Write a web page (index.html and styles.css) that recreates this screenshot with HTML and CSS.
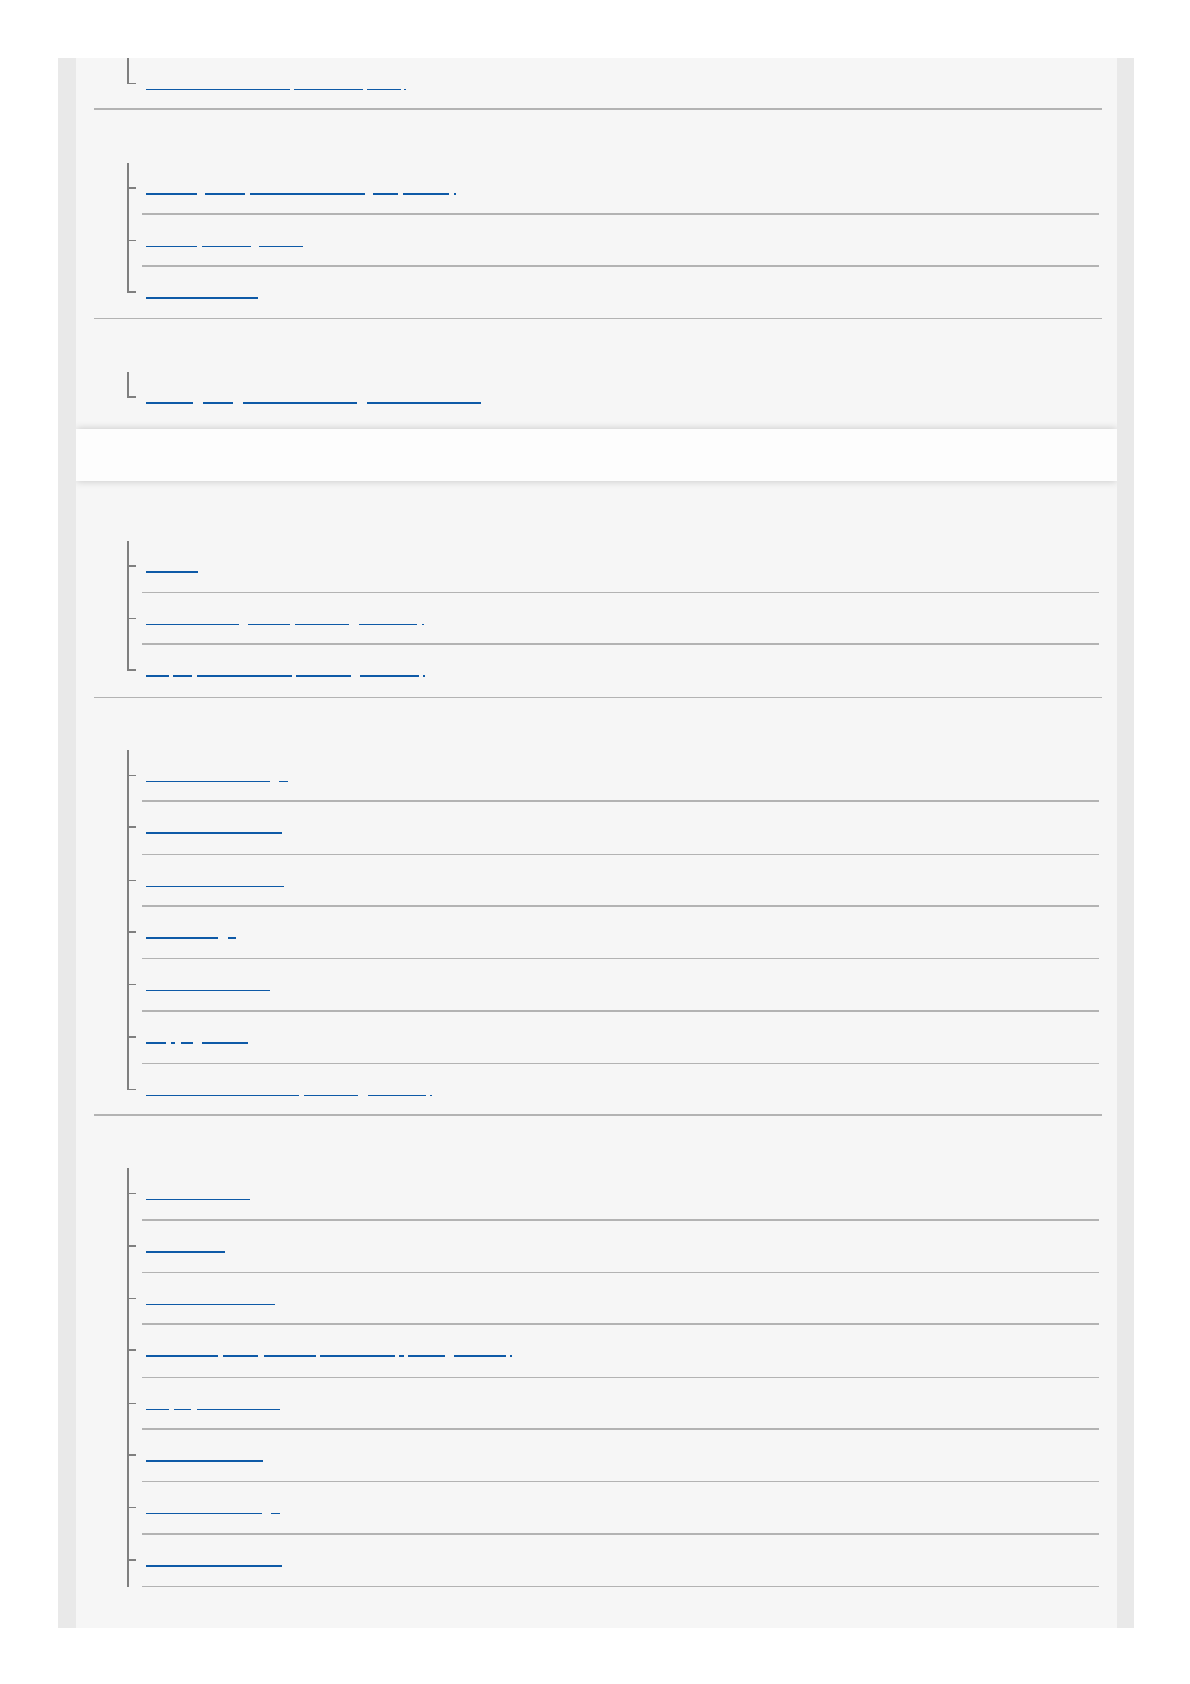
FILE: index.html
```html
<!DOCTYPE html>
<html lang="en">
<head>
<meta charset="utf-8">
<title>Help Guide</title>
<link rel="stylesheet" href="styles.css">
</head>
<body>
<div class="frame">
  <div class="inner">
    <section class="panel p1">
      <div class="g gt">
        <ul class="tree">
          <li class="last nd"><a class="ln"><span style="width:144px"></span><span style="margin-left:4px;width:69px"></span><span style="margin-left:4px;width:34px"></span><span style="margin-left:3px;width:2px"></span></a></li>
        </ul>
      </div>
      <div class="g">
        <div class="gh"></div>
        <ul class="tree">
          <li class="b dt"><a class="ln"><span style="width:51px"></span><span style="margin-left:8px;width:40px"></span><span style="margin-left:5px;width:115px"></span><span style="margin-left:8px;width:25px"></span><span style="margin-left:5px;width:46px"></span><span style="margin-left:5px;width:2px"></span></a></li>
          <li class="dt"><a class="ln"><span style="width:51px"></span><span style="margin-left:5px;width:49px"></span><span style="margin-left:8px;width:44px"></span></a></li>
          <li class="b last nd"><a class="ln"><span style="width:112px"></span></a></li>
        </ul>
      </div>
      <div class="g gn">
        <div class="gh"></div>
        <ul class="tree">
          <li class="b last nd"><a class="ln"><span style="width:47px"></span><span style="margin-left:10px;width:30px"></span><span style="margin-left:10px;width:114px"></span><span style="margin-left:10px;width:114px"></span></a></li>
        </ul>
      </div>
    </section>
    <div class="bar"></div>
    <section class="panel p2">
      <div class="g">
        <div class="gh"></div>
        <ul class="tree">
          <li class="b"><a class="ln"><span style="width:52px"></span></a></li>
          <li class="dt"><a class="ln"><span style="width:93px"></span><span style="margin-left:9px;width:42px"></span><span style="margin-left:5px;width:54px"></span><span style="margin-left:10px;width:58px"></span><span style="margin-left:5px;width:2px"></span></a></li>
          <li class="b last nd"><a class="ln"><span style="width:23px"></span><span style="margin-left:4px;width:19px"></span><span style="margin-left:5px;width:95px"></span><span style="margin-left:4px;width:55px"></span><span style="margin-left:9px;width:59px"></span><span style="margin-left:4px;width:2px"></span></a></li>
        </ul>
      </div>
      <div class="g gt">
        <div class="gh"></div>
        <ul class="tree">
          <li class="dt"><a class="ln"><span style="width:124px"></span><span style="margin-left:9px;width:9px"></span></a></li>
          <li class="b"><a class="ln"><span style="width:136px"></span></a></li>
          <li class="dt"><a class="ln"><span style="width:138px"></span></a></li>
          <li class="b"><a class="ln"><span style="width:72px"></span><span style="margin-left:10px;width:8px"></span></a></li>
          <li class="dt"><a class="ln"><span style="width:124px"></span></a></li>
          <li class="b"><a class="ln"><span style="width:20px"></span><span style="margin-left:5px;width:4px"></span><span style="margin-left:6px;width:12px"></span><span style="margin-left:9px;width:46px"></span></a></li>
          <li class="last nd"><a class="ln"><span style="width:153px"></span><span style="margin-left:5px;width:54px"></span><span style="margin-left:10px;width:58px"></span><span style="margin-left:4px;width:2px"></span></a></li>
        </ul>
      </div>
      <div class="g gn">
        <div class="gh"></div>
        <ul class="tree">
          <li class="dt"><a class="ln"><span style="width:104px"></span></a></li>
          <li class="b"><a class="ln"><span style="width:79px"></span></a></li>
          <li class="dt"><a class="ln"><span style="width:129px"></span></a></li>
          <li class="b"><a class="ln"><span style="width:72px"></span><span style="margin-left:5px;width:35px"></span><span style="margin-left:6px;width:52px"></span><span style="margin-left:4px;width:75px"></span><span style="margin-left:4px;width:5px"></span><span style="margin-left:4px;width:37px"></span><span style="margin-left:9px;width:52px"></span><span style="margin-left:4px;width:2px"></span></a></li>
          <li class="dt"><a class="ln"><span style="width:23px"></span><span style="margin-left:5px;width:17px"></span><span style="margin-left:6px;width:83px"></span></a></li>
          <li class="b"><a class="ln"><span style="width:117px"></span></a></li>
          <li class="dt"><a class="ln"><span style="width:116px"></span><span style="margin-left:9px;width:9px"></span></a></li>
          <li class="b"><a class="ln"><span style="width:136px"></span></a></li>
        </ul>
      </div>
    </section>
  </div>
</div>
</body>
</html>
```

FILE: styles.css
```css
* {
  box-sizing: border-box;
  margin: 0;
  padding: 0;
}

html,
body {
  background: #ffffff;
}

body {
  font-family: "Liberation Sans", Arial, sans-serif;
  font-size: 14px;
  color: #000;
}

.frame {
  margin: 58px 0 0 58px;
  width: 1076px;
  padding: 0 17px 0 18px;
  background: #e9e9e9;
}

.inner {
  overflow: hidden;
}

.panel {
  background: #f6f6f6;
}

.p1 {
  padding-bottom: 5px;
}

.p2 {
  padding-top: 7.5px;
  padding-bottom: 41px;
}

.bar {
  position: relative;
  z-index: 1;
  height: 52px;
  background: #fdfdfd;
  box-shadow: 0 0 8px rgba(0, 0, 0, 0.2);
}

.g {
  margin: 0 15px 0 18px;
  background: linear-gradient(#b3b3b3, #b3b3b3) left bottom / 100% 1px no-repeat;
}

.g.gt {
  background-size: 100% 2px;
}

.g.gn {
  background: none;
}

.gh {
  height: 52.3px;
}

.tree {
  list-style: none;
  margin: 0 3px 0 48px;
}

.tree li {
  position: relative;
  height: 52.3px;
  padding: 31px 0 0 4px;
  background: linear-gradient(#b3b3b3, #b3b3b3) left bottom / 100% 1px no-repeat;
}

.tree li.dt {
  background-size: 100% 2px;
}

.tree li.nd {
  background: none;
}

.tree li::before {
  content: "";
  position: absolute;
  left: -15px;
  top: 0;
  bottom: 0;
  width: 2px;
  background: #7f7f7f;
}

.tree li.last::before {
  bottom: auto;
  height: 26px;
}

.tree li::after {
  content: "";
  position: absolute;
  left: -13px;
  top: 25px;
  width: 7px;
  height: 1px;
  background: #7f7f7f;
}

.tree li.b {
  padding-top: 30px;
}

.tree li.b::after {
  top: 24px;
  height: 2px;
}

.ln {
  display: flex;
  height: 1px;
}

.tree li.b .ln {
  height: 2px;
}

.ln span {
  flex: 0 0 auto;
  height: 100%;
  background: #0e5aa7;
}
```
